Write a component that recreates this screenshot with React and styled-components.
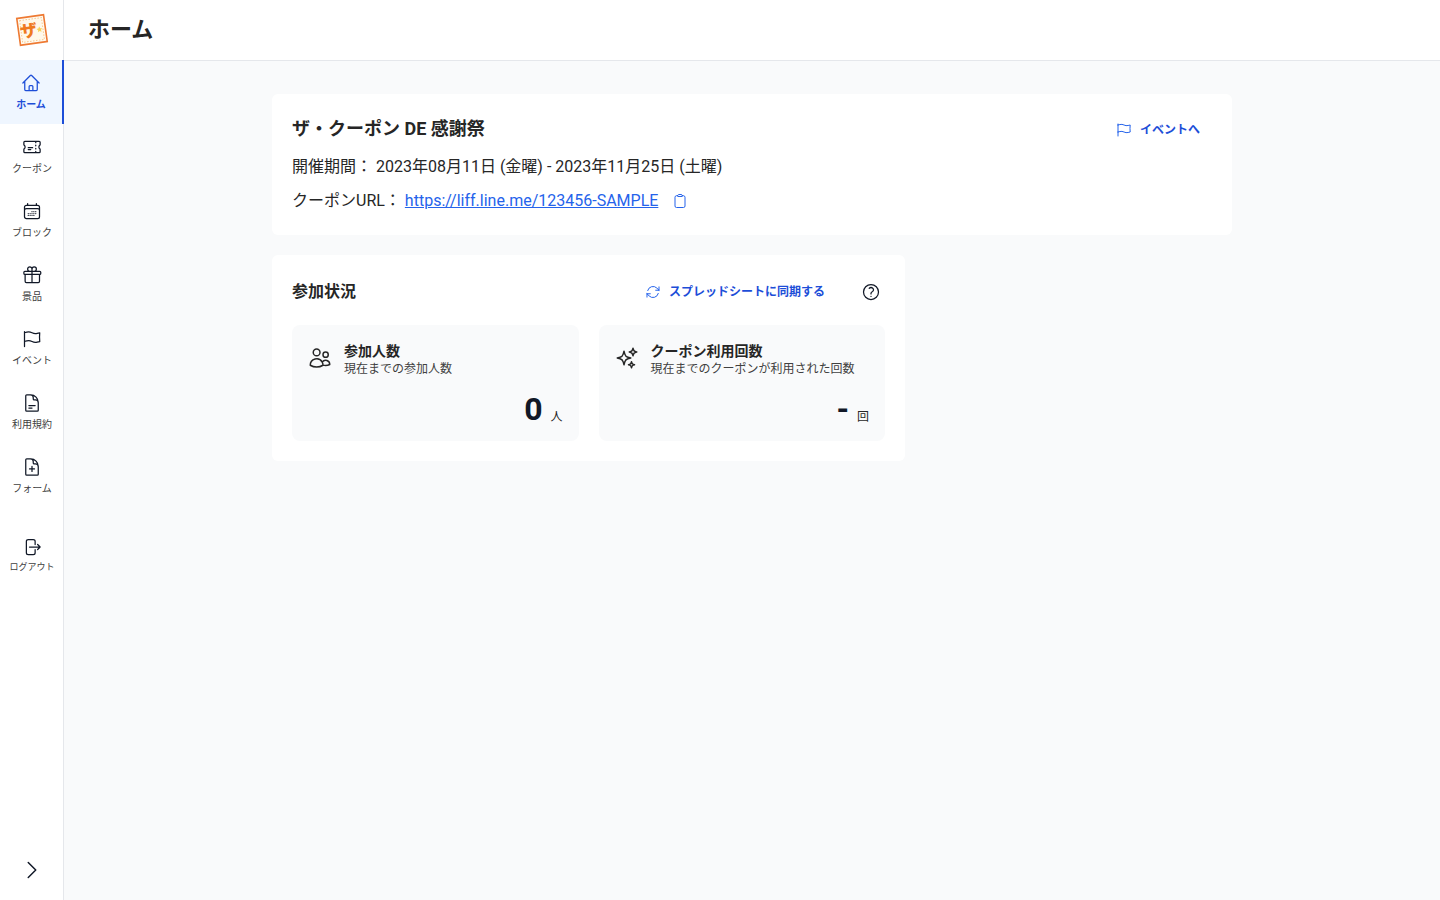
import React from 'react';
import styled, { createGlobalStyle } from 'styled-components';
import {
  HiOutlineHome,
  HiOutlineTicket,
  HiOutlineCalendarDays,
  HiOutlineGift,
  HiOutlineFlag,
  HiOutlineDocumentText,
  HiOutlineDocumentPlus,
  HiOutlineArrowRightOnRectangle,
  HiOutlineChevronRight,
  HiOutlineClipboard,
  HiOutlineUsers,
  HiOutlineSparkles,
  HiOutlineArrowPath,
  HiOutlineQuestionMarkCircle,
} from 'react-icons/hi2';

const GlobalStyle = createGlobalStyle`
  html, body {
    margin: 0;
    padding: 0;
    height: 100%;
    background: #f9fafb;
    font-family: Roboto, "Noto Sans CJK JP", sans-serif;
    color: #262626;
  }
  * { box-sizing: border-box; }
`;

const navItems = [
  { label: 'ホーム', Icon: HiOutlineHome, active: true },
  { label: 'クーポン', Icon: HiOutlineTicket },
  { label: 'ブロック', Icon: HiOutlineCalendarDays },
  { label: '景品', Icon: HiOutlineGift },
  { label: 'イベント', Icon: HiOutlineFlag },
  { label: '利用規約', Icon: HiOutlineDocumentText },
  { label: 'フォーム', Icon: HiOutlineDocumentPlus },
];

function Logo() {
  return (
    <svg width="36" height="36" viewBox="0 0 36 36">
      <g transform="rotate(-8 18 18)">
        <rect x="4.5" y="4.5" width="27" height="27" fill="#fffaf0" stroke="#ee7a33" strokeWidth="1.6" />
        <rect x="7" y="7" width="22" height="22" fill="#fff8ea" stroke="#f8c98f" strokeWidth="1" strokeDasharray="1.5 1.5" />
        <text x="14.5" y="24.5" textAnchor="middle" fontSize="17" fontWeight="900" fill="#ef7a1f" fontFamily="'Noto Sans CJK JP', sans-serif">ザ</text>
        <path d="M25.5 15.5l.9 1.9 2 .2-1.5 1.4.4 2-1.8-1-1.8 1 .4-2-1.5-1.4 2-.2z" fill="#f8d25a" />
      </g>
    </svg>
  );
}

export default function App() {
  return (
    <>
      <GlobalStyle />
      <Page>
        <Sidebar>
          <LogoBox><Logo /></LogoBox>
          {navItems.map(({ label, Icon, active }) => (
            <NavItem key={label} $active={active}>
              <Icon size={20} />
              <span>{label}</span>
            </NavItem>
          ))}
          <LogoutItem>
            <HiOutlineArrowRightOnRectangle size={20} />
            <span>ログアウト</span>
          </LogoutItem>
          <Collapse><HiOutlineChevronRight size={24} /></Collapse>
        </Sidebar>
        <Body>
          <Header><h1>ホーム</h1></Header>
          <Main>
            <EventCard>
              <EventHead>
                <h2>ザ・クーポン DE 感謝祭</h2>
                <EventLink href="#">
                  <HiOutlineFlag size={16} />
                  イベントへ
                </EventLink>
              </EventHead>
              <InfoRow>開催期間： 2023年08月11日 (金曜) - 2023年11月25日 (土曜)</InfoRow>
              <InfoRow>
                クーポンURL：
                <UrlLink href="#">https://liff.line.me/123456-SAMPLE</UrlLink>
                <CopyIcon><HiOutlineClipboard size={16} /></CopyIcon>
              </InfoRow>
            </EventCard>
            <StatusCard>
              <StatusHead>
                <h3>参加状況</h3>
                <StatusActions>
                  <LinkButton href="#">
                    <HiOutlineArrowPath size={16} />
                    スプレッドシートに同期する
                  </LinkButton>
                  <HelpIcon size={20} />
                </StatusActions>
              </StatusHead>
              <StatGrid>
                <Stat>
                  <StatTop>
                    <HiOutlineUsers size={24} />
                    <div>
                      <StatTitle>参加人数</StatTitle>
                      <StatNote>現在までの参加人数</StatNote>
                    </div>
                  </StatTop>
                  <StatValue><strong>0</strong><small>人</small></StatValue>
                </Stat>
                <Stat>
                  <StatTop>
                    <HiOutlineSparkles size={24} />
                    <div>
                      <StatTitle>クーポン利用回数</StatTitle>
                      <StatNote>現在までのクーポンが利用された回数</StatNote>
                    </div>
                  </StatTop>
                  <StatValue><strong>-</strong><small>回</small></StatValue>
                </Stat>
              </StatGrid>
            </StatusCard>
          </Main>
        </Body>
      </Page>
    </>
  );
}

const Page = styled.div`
  display: flex;
  min-height: 900px;
  height: 900px;
  overflow: hidden;
`;

const Sidebar = styled.aside`
  position: relative;
  width: 64px;
  flex-shrink: 0;
  background: #fff;
  border-right: 1px solid #e5e7eb;
  display: flex;
  flex-direction: column;
`;

const LogoBox = styled.div`
  height: 60px;
  display: flex;
  align-items: center;
  justify-content: center;
`;

const NavItem = styled.a`
  width: 64px;
  height: 64px;
  padding-top: 13px;
  display: flex;
  flex-direction: column;
  align-items: center;
  gap: 4px;
  font-size: 10px;
  line-height: 15px;
  color: ${(p) => (p.$active ? '#1d4ed8' : '#404040')};
  font-weight: ${(p) => (p.$active ? 700 : 400)};
  background: ${(p) => (p.$active ? '#eff6ff' : 'transparent')};
  border-right: ${(p) => (p.$active ? '2px solid #1d4ed8' : 'none')};
  svg { color: ${(p) => (p.$active ? '#1d4ed8' : '#111827')}; }
`;

const LogoutItem = styled(NavItem)`
  margin-top: 16px;
  gap: 3px;
  font-size: 9px;
`;

const Collapse = styled.div`
  position: absolute;
  left: 20px;
  bottom: 18px;
  display: flex;
  color: #111827;
`;

const Body = styled.div`
  flex: 1;
  min-width: 0;
  display: flex;
  flex-direction: column;
`;

const Header = styled.header`
  height: 61px;
  background: #fff;
  border-bottom: 1px solid #e5e7eb;
  padding: 0 24px 6px;
  display: flex;
  align-items: center;

  h1 {
    margin: 0;
    font-size: 22px;
    font-weight: 700;
    color: #262626;
  }
`;

const Main = styled.main`
  width: 960px;
  margin-left: 208px;
  padding-top: 33px;
  display: flex;
  flex-direction: column;
  gap: 20px;
`;

const Card = styled.section`
  background: #fff;
  border-radius: 6px;
  padding: 20px;
`;

const EventCard = styled(Card)`
  height: 141px;
`;

const EventHead = styled.div`
  display: flex;
  align-items: center;
  justify-content: space-between;
  padding-right: 12px;
  height: 26px;
  margin-bottom: 15px;

  h2 {
    margin: 0;
    font-size: 18px;
    font-weight: 700;
    color: #262626;
  }
`;

const InfoRow = styled.div`
  display: flex;
  align-items: center;
  height: 24px;
  font-size: 16px;
  line-height: 24px;
  color: #262626;
  white-space: pre;
  margin-bottom: 10px;
`;

const UrlLink = styled.a`
  color: #2563eb;
  text-decoration: underline;
  margin-left: 4px;
`;

const CopyIcon = styled.span`
  display: flex;
  margin-left: 14px;
  color: #2563eb;
`;

const LinkButton = styled.a`
  display: flex;
  align-items: center;
  gap: 8px;
  font-size: 12px;
  font-weight: 700;
  color: #1d4ed8;
  text-decoration: none;
  svg { color: #2563eb; margin-top: 4px; }
`;

const EventLink = styled(LinkButton)`
  margin-top: 2px;
`;

const StatusCard = styled(Card)`
  width: 633px;
  height: 206px;
`;

const StatusHead = styled.div`
  display: flex;
  align-items: center;
  justify-content: space-between;
  height: 30px;
  margin-bottom: 20px;

  h3 {
    margin: 0;
    font-size: 16px;
    font-weight: 700;
    color: #262626;
  }
`;

const StatusActions = styled.div`
  display: flex;
  align-items: center;
  gap: 36px;
  padding-right: 4px;
`;

const HelpIcon = styled(HiOutlineQuestionMarkCircle)`
  color: #111827;
  margin-top: 4px;
`;

const StatGrid = styled.div`
  display: grid;
  grid-template-columns: 1fr 1fr;
  gap: 20px;
`;

const Stat = styled.div`
  height: 116px;
  background: #f9fafb;
  border-radius: 8px;
  padding: 16px 16px 14px;
  display: flex;
  flex-direction: column;
  justify-content: space-between;
`;

const StatTop = styled.div`
  display: flex;
  align-items: flex-start;
  gap: 12px;
  svg { color: #262626; flex-shrink: 0; margin-top: 5px; }
`;

const StatTitle = styled.div`
  font-size: 14px;
  line-height: 20px;
  font-weight: 700;
  color: #262626;
`;

const StatNote = styled.div`
  font-size: 12px;
  line-height: 16px;
  color: #404040;
`;

const StatValue = styled.div`
  display: flex;
  align-items: flex-end;
  justify-content: flex-end;
  gap: 8px;

  strong {
    font-size: 32px;
    line-height: 36px;
    font-weight: 700;
    color: #111827;
  }

  small {
    font-size: 12px;
    line-height: 20px;
    color: #262626;
  }
`;
